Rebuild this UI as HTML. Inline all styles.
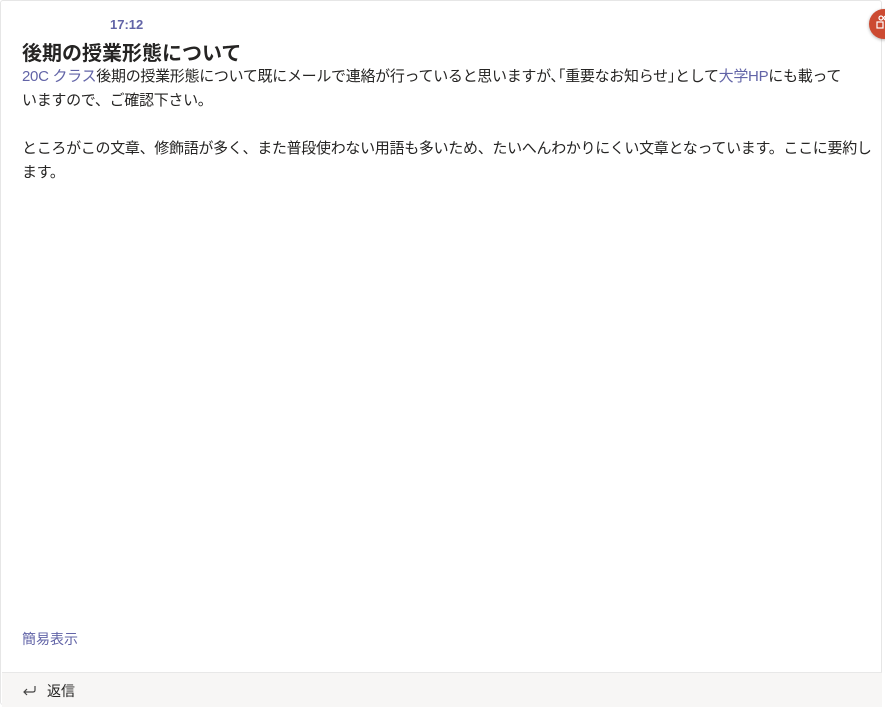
<!DOCTYPE html>
<html><head><meta charset="utf-8"><style>
body{margin:0;width:885px;height:708px;background:#fff;font-family:"Liberation Sans","Noto Sans CJK JP",sans-serif;overflow:hidden;position:relative}
.card{position:absolute;left:0;top:0;width:882px;height:705px;border:1px solid #e6e6e6;border-radius:3px;background:#fff;box-sizing:border-box}
.time{position:absolute;left:109px;top:16px;font-size:13px;font-weight:bold;color:#6264a7}
.title{position:absolute;left:21px;top:36px;font-size:20px;font-weight:bold;color:#252423}
.body{position:absolute;left:21px;top:64px;width:870px;font-size:15px;line-height:24px;color:#252423;letter-spacing:-0.3px;white-space:nowrap}
.l{color:#6264a7}
.simple{position:absolute;left:21px;top:628px;font-size:14px;color:#6264a7}
.foot{position:absolute;left:1px;top:671px;width:880px;height:34px;background:#f7f6f5;border-top:1px solid #e8e8e8;font-size:14px;color:#252423}
.foot span{position:absolute;left:45px;top:8px}
.circ{position:absolute;left:869px;top:9px;width:30px;height:30px;border-radius:50%;background:#cc4a31;box-shadow:0 1px 3px rgba(0,0,0,.3)}
</style></head><body>
<div class="card">
<div class="time">17:12</div>
<div class="title">後期の授業形態について</div>
<div class="body"><span class="l">20C クラス</span>後期の授業形態について既にメールで連絡が行っていると思いますが､｢重要なお知らせ｣として<span class="l">大学HP</span>にも載って<br>いますので、ご確認下さい。<br><br>ところがこの文章、修飾語が多く、また普段使わない用語も多いため、たいへんわかりにくい文章となっています。ここに要約し<br>ます。</div>
<div class="simple">簡易表示</div>
<div class="foot"><svg style="position:absolute;left:19px;top:10px" width="16" height="14" viewBox="0 0 16 14"><path d="M14 3v4q0 2-2 2H3M6 6 3 9l3 3" fill="none" stroke="#444" stroke-width="1.2"/></svg><span>返信</span></div>
</div>
<div class="circ"><svg width="30" height="30" viewBox="0 0 30 30"><circle cx="12" cy="9" r="2" fill="none" stroke="#fff" stroke-width="1.2"/><circle cx="17" cy="9" r="2" fill="none" stroke="#fff" stroke-width="1.2"/><rect x="8" y="13" width="6" height="6" fill="none" stroke="#fff" stroke-width="1.2"/></svg></div>
</body></html>
